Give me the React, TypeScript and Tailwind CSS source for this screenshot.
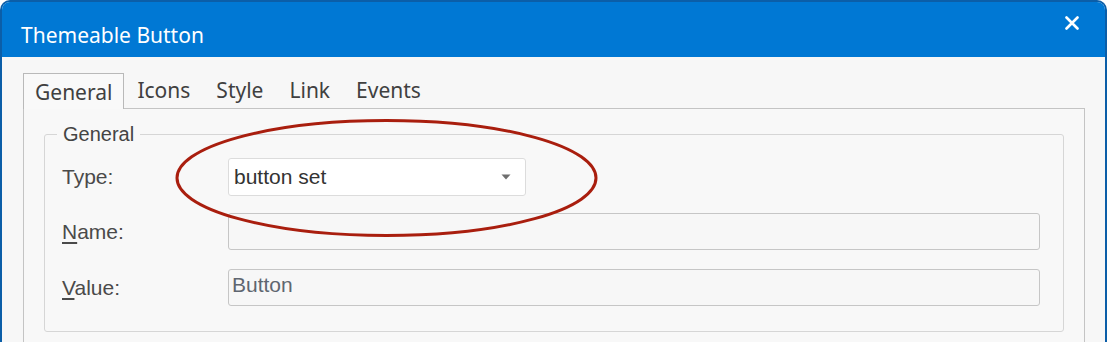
const tabs = ["General", "Icons", "Style", "Link", "Events"];

const App: React.FC = () => {
  return (
    <div className="relative w-[1107px] h-[344px] bg-white">
      <div className="w-[1107px] h-[342px] flex flex-col overflow-hidden rounded-t-[10px] border-2 border-b-0 border-[#0b5ea8] bg-[#f7f7f7]">
        {/* title bar */}
        <div className="h-[55px] shrink-0 flex items-start bg-[#0078d4] pl-[19px]">
          <div className="mt-[19px] text-[21px] leading-[28px] text-white font-['Noto_Sans',sans-serif]">
            Themeable Button
          </div>
          <svg className="ml-auto mt-[14px] mr-[26px]" width="14" height="14" viewBox="0 0 14 14">
            <path d="M1.5 1.5 L12.5 12.5 M12.5 1.5 L1.5 12.5" stroke="white" strokeWidth="2.6" strokeLinecap="round" />
          </svg>
        </div>

        {/* body */}
        <div className="flex-1 flex flex-col pl-[21px] pt-[15px] font-['Noto_Sans',sans-serif]">
          <div className="flex items-end h-[36px]">
            {tabs.map((tab, i) => (
              <div
                key={tab}
                className={
                  i === 0
                    ? "relative z-10 -mb-px h-[36px] flex items-center px-[11px] pt-[2px] border border-b-0 border-[#b9b9b9] bg-[#f9f9f9] text-[21px] text-[#404040]"
                    : "h-[36px] flex items-center px-[12px] pt-[2px] border border-transparent text-[21px] text-[#404040]"
                }
              >
                {tab}
              </div>
            ))}
          </div>

          {/* tab panel */}
          <div className="flex-1 w-[1062px] border border-b-0 border-[#c4c4c4] bg-[#f8f8f8] pt-[13px] pl-[20px] font-['Liberation_Sans',Arial,sans-serif]">
            <fieldset className="w-[1020px] rounded-[3px] border border-[#d6d6d6] pl-[17px] pb-[25px]">
              <legend className="-ml-[5px] px-[6px] text-[20px] leading-[24px] text-[#444]">
                General
              </legend>

              <div className="flex flex-col pt-[12px]">
                <div className="flex items-center h-[38px]">
                  <div className="w-[166px] text-[21px] text-[#4a4a4a]">Type:</div>
                  <div className="w-[298px] h-[38px] flex items-center justify-between rounded-[3px] border border-[#dcdcdc] bg-white pl-[5px] pr-[14px]">
                    <span className="text-[21px] text-[#333]">button set</span>
                    <svg width="10" height="6" viewBox="0 0 10 6">
                      <path d="M0.5 0.5 H9.5 L5 5.5 Z" fill="#6e6e6e" />
                    </svg>
                  </div>
                </div>

                <div className="flex items-center h-[37px] mt-[17px]">
                  <div className="w-[166px] text-[21px] text-[#4a4a4a]">
                    <u className="underline-offset-[3px]">N</u>ame:
                  </div>
                  <div className="w-[812px] h-[37px] rounded-[3px] border border-[#c6c6c6] bg-[#f7f7f7]" />
                </div>

                <div className="flex items-center h-[37px] mt-[19px]">
                  <div className="w-[166px] text-[21px] text-[#4a4a4a]">
                    <u className="underline-offset-[3px]">V</u>alue:
                  </div>
                  <div className="w-[812px] h-[37px] rounded-[3px] border border-[#c6c6c6] bg-[#f7f7f7] pl-[3px] pt-[3px] text-[21px] leading-[24px] text-[#5f6670]">
                    Button
                  </div>
                </div>
              </div>
            </fieldset>
          </div>
        </div>
      </div>

      {/* annotation */}
      <svg className="absolute left-0 top-0 pointer-events-none" width="1107" height="344">
        <ellipse cx="386.5" cy="178" rx="209.5" ry="57.5" fill="none" stroke="#a91e0e" strokeWidth="3" />
      </svg>
    </div>
  );
};

export default App;
